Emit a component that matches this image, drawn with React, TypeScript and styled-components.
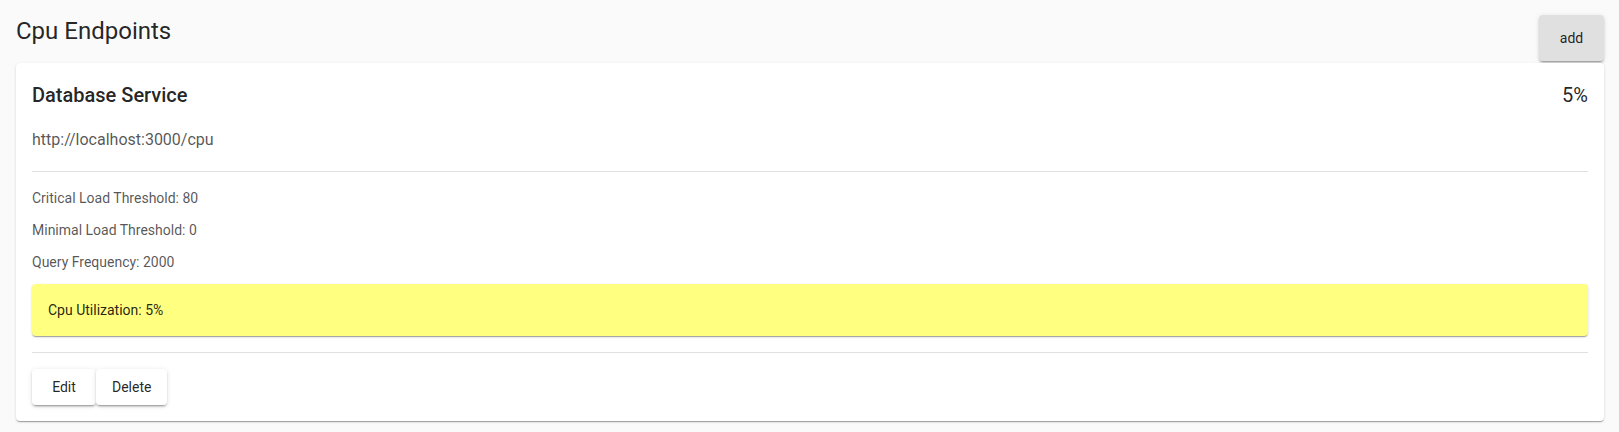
import React from "react";
import styled, { createGlobalStyle } from "styled-components";

const Global = createGlobalStyle`
  html, body { margin: 0; padding: 0; background: #fafafa; }
  body { font-family: Roboto, "Noto Sans", "Liberation Sans", sans-serif; }
  * { box-sizing: border-box; }
`;

const Page = styled.div`
  padding: 15px 15px 11px 16px;
`;

const Header = styled.div`
  display: flex;
  justify-content: space-between;
  align-items: flex-start;
  height: 48px;
`;

const PageTitle = styled.h5`
  margin: 0;
  font-size: 24px;
  line-height: 32px;
  font-weight: 400;
  color: rgba(0, 0, 0, 0.87);
`;

const AddButton = styled.button`
  height: 46px;
  min-width: 65px;
  border: none;
  border-radius: 4px;
  background: #e0e0e0;
  color: rgba(0, 0, 0, 0.87);
  font-family: inherit;
  font-size: 14px;
  font-weight: 400;
  padding: 0 16px;
  box-shadow: 0 3px 1px -2px rgba(0,0,0,0.2), 0 2px 2px 0 rgba(0,0,0,0.14), 0 1px 5px 0 rgba(0,0,0,0.12);
`;

const Card = styled.div`
  position: relative;
  background: #fff;
  border-radius: 4px;
  padding: 16px;
  box-shadow: 0 2px 1px -1px rgba(0,0,0,0.2), 0 1px 1px 0 rgba(0,0,0,0.14), 0 1px 3px 0 rgba(0,0,0,0.12);
`;

const TitleRow = styled.div`
  display: flex;
  justify-content: space-between;
  align-items: center;
`;

const CardTitle = styled.h6`
  margin: 0;
  font-size: 20px;
  line-height: 32px;
  font-weight: 500;
  color: rgba(0, 0, 0, 0.87);
`;

const Value = styled.span`
  font-size: 20px;
  line-height: 32px;
  font-weight: 400;
  color: rgba(0, 0, 0, 0.87);
`;

const Url = styled.div`
  margin-top: 17px;
  font-size: 16px;
  line-height: 24px;
  color: rgba(0, 0, 0, 0.68);
`;

const Divider = styled.hr<{ $top: number }>`
  margin: ${(p) => p.$top}px 0 16px;
  border: none;
  border-top: 1px solid rgba(0, 0, 0, 0.12);
`;

const Details = styled.div`
  display: flex;
  flex-direction: column;
  gap: 12px;
`;

const Detail = styled.div`
  font-size: 14px;
  line-height: 20px;
  color: rgba(0, 0, 0, 0.68);
`;

const Status = styled.div`
  margin-top: 12px;
  background: #ffff80;
  border-radius: 4px;
  padding: 16px;
  font-size: 14px;
  line-height: 20px;
  color: rgba(0, 0, 0, 0.87);
  box-shadow: 0 2px 1px -1px rgba(0,0,0,0.2), 0 1px 1px 0 rgba(0,0,0,0.14), 0 1px 3px 0 rgba(0,0,0,0.12);
`;

const Actions = styled.div`
  display: flex;
`;

const ActionButton = styled.button`
  height: 36px;
  min-width: 64px;
  padding: 0 16px;
  border: none;
  border-radius: 4px;
  background: #fff;
  color: rgba(0, 0, 0, 0.87);
  font-family: inherit;
  font-size: 14px;
  font-weight: 400;
  box-shadow: 0 3px 1px -2px rgba(0,0,0,0.2), 0 2px 2px 0 rgba(0,0,0,0.14), 0 1px 5px 0 rgba(0,0,0,0.12);
`;

export default function App() {
  return (
    <>
      <Global />
      <Page>
        <Header>
          <PageTitle>Cpu Endpoints</PageTitle>
          <AddButton>add</AddButton>
        </Header>
        <Card>
          <TitleRow>
            <CardTitle>Database Service</CardTitle>
            <Value>5%</Value>
          </TitleRow>
          <Url>http://localhost:3000/cpu</Url>
          <Divider $top={19} />
          <Details>
            <Detail>Critical Load Threshold: 80</Detail>
            <Detail>Minimal Load Threshold: 0</Detail>
            <Detail>Query Frequency: 2000</Detail>
          </Details>
          <Status>Cpu Utilization: 5%</Status>
          <Divider $top={16} />
          <Actions>
            <ActionButton>Edit</ActionButton>
            <ActionButton>Delete</ActionButton>
          </Actions>
        </Card>
      </Page>
    </>
  );
}
